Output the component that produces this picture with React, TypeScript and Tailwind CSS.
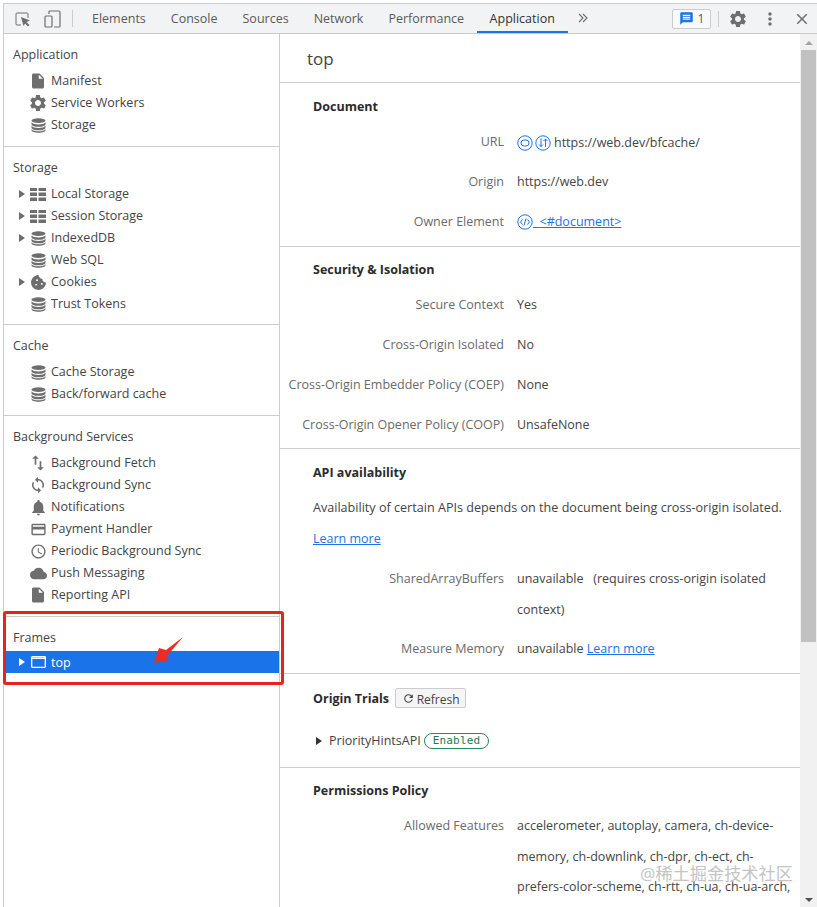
import { ReactNode } from "react";
import { FaCookieBite } from "react-icons/fa";
import {
  MdAccessTime,
  MdClose,
  MdCloud,
  MdCreditCard,
  MdInsertDriveFile,
  MdMessage,
  MdMoreVert,
  MdNotifications,
  MdRefresh,
  MdSettings,
  MdSwapVert,
  MdSync,
} from "react-icons/md";

const tabs = ["Elements", "Console", "Sources", "Network", "Performance"];

function TableIcon() {
  return (
    <svg width="16" height="13" viewBox="0 0 16 13" fill="currentColor">
      <rect x="0" y="0" width="7" height="3" />
      <rect x="8.5" y="0" width="7.5" height="3" />
      <rect x="0" y="4.5" width="7" height="3.5" />
      <rect x="8.5" y="4.5" width="7.5" height="3.5" />
      <rect x="0" y="9.5" width="7" height="3.5" />
      <rect x="8.5" y="9.5" width="7.5" height="3.5" />
    </svg>
  );
}

function Db() {
  return (
    <svg width="15" height="15" viewBox="0 0 15 15" fill="currentColor">
      <ellipse cx="7.5" cy="2.6" rx="7" ry="2.4" />
      <path d="M.5 4.300c1 1.500 3.800 2.200 7 2.200s6-.7 7-2.200V6.200c0 1.400-3 2.600-7 2.600S.5 7.600.5 6.200z" />
      <path d="M.5 7.800c1 1.500 3.800 2.200 7 2.200s6-.7 7-2.200v1.900c0 1.400-3 2.600-7 2.600s-7-1.200-7-2.600z" />
      <path d="M.5 11.200c1 1.400 3.800 2.100 7 2.100s6-.7 7-2.100v1.100c0 1.400-3 2.500-7 2.500s-7-1.100-7-2.500z" />
    </svg>
  );
}

function FrameIcon() {
  return (
    <svg width="15" height="12" viewBox="0 0 15 12" fill="none" stroke="currentColor">
      <rect x="0.700" y="0.700" width="13.600" height="10.600" rx="0.5" strokeWidth="1.300" />
      <path d="M1 2.200h13" strokeWidth="1.500" />
    </svg>
  );
}

function Caret({ dark }: { dark?: boolean }) {
  return (
    <svg width="6" height="8" viewBox="0 0 6 8" fill="currentColor" className={dark ? "text-[#333]" : ""}>
      <path d="M0 0l6 4-6 4z" />
    </svg>
  );
}

function SideItem({ icon, label, caret }: { icon: ReactNode; label: string; caret?: boolean }) {
  return (
    <div className="flex h-[22px] items-center text-[#444]">
      <div className="flex w-[22px] justify-end pr-[1px] text-[#6e6e6e]">{caret && <Caret />}</div>
      <div className="ml-[2px] flex w-[20px] justify-center text-[#6e6e6e]">{icon}</div>
      <span className="ml-[3px]">{label}</span>
    </div>
  );
}

function SideGroup({ title, children }: { title: string; children: ReactNode }) {
  return (
    <div className="border-b border-[#ccc] pt-[10px] pb-[10px]">
      <div className="flex h-[22px] items-center pl-[9px] text-[#444]">{title}</div>
      <div className="mt-[4px]">{children}</div>
    </div>
  );
}

function Row({ label, children }: { label: string; children: ReactNode }) {
  return (
    <div className="mt-[9.3px] flex leading-[30.5px]">
      <div className="w-[224px] shrink-0 text-right whitespace-nowrap text-[#6a6a6a]">{label}</div>
      <div className="ml-[13px] w-[280px] text-[#444]">{children}</div>
    </div>
  );
}

function RoundIcon({ children }: { children: ReactNode }) {
  return (
    <svg width="16" height="16" viewBox="0 0 16 16" fill="none" stroke="#1a73e8" strokeWidth="1" className="shrink-0">
      <circle cx="8" cy="8" r="7.200" />
      {children}
    </svg>
  );
}

export default function App() {
  return (
    <div
      className="relative h-[907px] w-[817px] overflow-hidden bg-white pt-[3px] pl-[3px] text-[12.5px]"
      style={{ fontFamily: '"Open Sans", "Noto Sans CJK SC", sans-serif' }}
    >
      <div className="flex h-[904px] flex-col border-l border-[#ccc]">
        {/* toolbar */}
        <header className="flex h-[31px] shrink-0 items-stretch border-t border-b border-[#ccc] bg-[#f1f3f4] text-[#5a5a5a]">
          <div className="flex w-[68px] items-center text-[#6e6e6e]">
            <svg width="16" height="16" viewBox="0 0 16 16" className="ml-[11px]" fill="none" stroke="currentColor">
              <path d="M6 14H2a1 1 0 0 1-1-1V3a1 1 0 0 1 1-1h10a1 1 0 0 1 1 1v4" strokeWidth="1" />
              <path d="M6 6l9 3.500-3.500 1.500 3 3-1.500 1.500-3-3L8.500 15z" fill="currentColor" stroke="none" />
            </svg>
            <svg width="17" height="18" viewBox="0 0 17 18" className="ml-[13px]" fill="none" stroke="currentColor">
              <path d="M5 4V2a1 1 0 0 1 1-1h9a1 1 0 0 1 1 1v14a1 1 0 0 1-1 1H10" strokeWidth="1.200" />
              <rect x="1" y="6" width="7" height="11" rx="1" strokeWidth="1.200" />
            </svg>
          </div>
          <div className="my-[6px] w-px bg-[#ccc]" />
          <div className="ml-[6.5px] flex">
            {tabs.map((t) => (
              <div key={t} className="flex items-center px-[12.5px] pt-[2px] whitespace-nowrap">
                {t}
              </div>
            ))}
            <div className="flex items-center border-b-2 border-[#1a73e8] px-[13px] pt-[4px] whitespace-nowrap text-[#333]">
              Application
            </div>
          </div>
          <div className="ml-[10px] flex items-center pb-[1px] text-[#6e6e6e]">
            <svg width="10" height="10" viewBox="0 0 10 10" fill="none" stroke="currentColor" strokeWidth="1.100">
              <path d="M1 1l4 4-4 4M5 1l4 4-4 4" />
            </svg>
          </div>
          <div className="ml-auto flex items-center text-[#6e6e6e]">
            <div className="flex h-[20px] w-[39px] items-center justify-center gap-[4px] rounded-[2px] border border-[#ccc] bg-[#f8f9fa] text-[12px] text-[#5a5a5a]">
              <MdMessage size={15} className="text-[#1a73e8]" />1
            </div>
            <div className="mx-[7px] h-[16px] w-px bg-[#ccc]" />
            <MdSettings size={20} className="ml-[2px]" />
            <MdMoreVert size={20} className="ml-[12px]" />
            <MdClose size={18} className="mr-[6px] ml-[13px]" />
          </div>
        </header>

        <div className="flex min-h-0 flex-1">
          {/* sidebar */}
          <aside className="w-[276px] shrink-0 border-r border-[#ccc]">
            <SideGroup title="Application">
              <SideItem icon={<MdInsertDriveFile size={18} />} label="Manifest" />
              <SideItem icon={<MdSettings size={20} />} label="Service Workers" />
              <SideItem icon={<Db />} label="Storage" />
            </SideGroup>
            <div className="[&>div]:pb-[9px]">
              <SideGroup title="Storage">
                <SideItem caret icon={<TableIcon />} label="Local Storage" />
                <SideItem caret icon={<TableIcon />} label="Session Storage" />
                <SideItem caret icon={<Db />} label="IndexedDB" />
                <SideItem icon={<Db />} label="Web SQL" />
                <SideItem caret icon={<FaCookieBite size={15} />} label="Cookies" />
                <SideItem icon={<Db />} label="Trust Tokens" />
              </SideGroup>
            </div>
            <SideGroup title="Cache">
              <SideItem icon={<Db />} label="Cache Storage" />
              <SideItem icon={<Db />} label="Back/forward cache" />
            </SideGroup>
            <SideGroup title="Background Services">
              <SideItem icon={<MdSwapVert size={20} />} label="Background Fetch" />
              <SideItem icon={<MdSync size={18} />} label="Background Sync" />
              <SideItem icon={<MdNotifications size={19} />} label="Notifications" />
              <SideItem icon={<MdCreditCard size={17} />} label="Payment Handler" />
              <SideItem icon={<MdAccessTime size={17} />} label="Periodic Background Sync" />
              <SideItem icon={<MdCloud size={17} />} label="Push Messaging" />
              <SideItem icon={<MdInsertDriveFile size={18} />} label="Reporting API" />
            </SideGroup>
            <div className="pt-[10px]">
              <div className="flex h-[22px] items-center pl-[9px] text-[#444]">Frames</div>
              <div className="mt-[2px] flex h-[22px] items-center bg-[#1a73e8] text-white">
                <div className="flex w-[22px] justify-end pr-[1px]">
                  <Caret />
                </div>
                <div className="ml-[2px] flex w-[20px] justify-center">
                  <FrameIcon />
                </div>
                <span className="ml-[3px] pt-[2px]">top</span>
              </div>
            </div>
          </aside>

          {/* main */}
          <main className="min-w-0 flex-1 overflow-hidden">
            <div className="flex h-[49px] items-center border-b border-[#ccc] pt-[1px] pl-[27px] text-[17px] text-[#444]">
              top
            </div>

            <section className="border-b border-[#ccc] pt-[13px] pb-[8.2px]">
              <h2 className="flex h-[22px] items-center pl-[33px] font-bold text-[#2b2b2b]">Document</h2>
              <div className="mt-[0.4px]">
                <Row label="URL">
                  <div className="flex h-[30.5px] items-center gap-[2px] pt-[1.5px]">
                    <RoundIcon>
                      <rect x="4" y="5" width="8" height="6" rx="3" />
                    </RoundIcon>
                    <RoundIcon>
                      <path d="M6 3.500v8M4 9.500l2 2 2-2M10.500 12V4M8.500 6l2-2 2 2" />
                    </RoundIcon>
                    <span className="ml-[1px]">https://web.dev/bfcache/</span>
                  </div>
                </Row>
                <Row label="Origin">https://web.dev</Row>
                <Row label="Owner Element">
                  <div className="flex items-center">
                    <RoundIcon>
                      <path d="M5.500 5.500L3.500 8l2 2.500M10.500 5.500l2 2.500-2 2.500M9 4.500L7 11.500" />
                    </RoundIcon>
                    <span className="whitespace-pre text-[#1a73e8] underline">  {"<#document>"}</span>
                  </div>
                </Row>
              </div>
            </section>

            <section className="border-b border-[#ccc] pt-[12.4px] pb-[8px]">
              <h2 className="flex h-[22px] items-center pl-[33px] font-bold text-[#2b2b2b]">Security & Isolation</h2>
              <div className="mt-[0.4px]">
                <Row label="Secure Context">Yes</Row>
                <Row label="Cross-Origin Isolated">No</Row>
                <Row label="Cross-Origin Embedder Policy (COEP)">None</Row>
                <Row label="Cross-Origin Opener Policy (COOP)">UnsafeNone</Row>
              </div>
            </section>

            <section className="border-b border-[#ccc] pt-[13px] pb-[8.2px]">
              <h2 className="flex h-[22px] items-center pl-[33px] font-bold text-[#2b2b2b]">API availability</h2>
              <p className="mt-[9px] pl-[33px] text-[12.6px] leading-[30.5px] whitespace-nowrap text-[#444]">
                Availability of certain APIs depends on the document being cross-origin isolated.
              </p>
              <p className="mt-[0.6px] pl-[33px] leading-[30.5px] text-[#1a73e8] underline">Learn more</p>
              <Row label="SharedArrayBuffers">
                <span className="whitespace-pre">unavailable   (requires cross-origin isolated</span>
                <br />
                context)
              </Row>
              <Row label="Measure Memory">
                unavailable <span className="text-[#1a73e8] underline">Learn more</span>
              </Row>
            </section>

            <section className="border-b border-[#ccc] pt-[14px] pb-[16px]">
              <div className="flex h-[20px] items-center pl-[33px]">
                <h2 className="pt-[3px] font-bold text-[#2b2b2b]">Origin Trials</h2>
                <button className="ml-[6px] flex h-[20px] w-[71px] items-center justify-center gap-[2px] rounded-[2px] border border-[#ccc] bg-[#f5f5f5] pt-[3px] text-[12px] text-[#444]">
                  <MdRefresh size={13} className="mb-[2px]" />
                  Refresh
                </button>
              </div>
              <div className="mt-[23px] flex h-[20px] items-center pl-[36px] text-[#444]">
                <Caret dark />
                <span className="ml-[7px]">PriorityHintsAPI</span>
                <span
                  className="ml-[3px] flex h-[16px] items-center rounded-full border border-[#1e8e5a] px-[8px] text-[11px] tracking-[0.2px] text-[#1e7a50]"
                  style={{ fontFamily: '"DejaVu Sans Mono", monospace' }}
                >
                  Enabled
                </span>
              </div>
            </section>

            <section className="pt-[12px]">
              <h2 className="flex h-[22px] items-center pl-[33px] font-bold text-[#2b2b2b]">Permissions Policy</h2>
              <div className="mt-[3.6px]">
                <Row label="Allowed Features">
                  accelerometer, autoplay, camera, ch-device-
                  <br />
                  memory, ch-downlink, ch-dpr, ch-ect, ch-
                  <br />
                  <span className="whitespace-nowrap">prefers-color-scheme, ch-rtt, ch-ua, ch-ua-arch,</span>
                </Row>
              </div>
            </section>
          </main>

          {/* scrollbar */}
          <div className="flex w-[17px] shrink-0 flex-col items-center bg-[#f1f1f1]">
            <div className="mt-[7px] h-0 w-0 border-x-[4px] border-b-[4px] border-x-transparent border-b-[#a3a3a3]" />
            <div className="mt-[5px] h-[592px] w-[15px] bg-[#c1c1c1]" />
            <div className="mt-auto mb-[5px] h-0 w-0 border-x-[4px] border-t-[4px] border-x-transparent border-t-[#505050]" />
          </div>
        </div>
      </div>

      {/* annotation drawn over the screenshot */}
      <div className="absolute top-[611px] left-[3px] h-[74px] w-[281px] rounded-[3px] border-[3px] border-[#e8231b]" />
      <svg className="absolute top-[636px] left-[152px]" width="32" height="30" viewBox="0 0 32 30">
        <path d="M31 1L14 14 7 12 2 27l15-3-2-4z" fill="#ee2c24" />
      </svg>
      <div className="absolute top-[861px] left-[640px] text-[17.2px] whitespace-nowrap text-[#c4c4c4] [text-shadow:0_0_1px_#fff]">
        @稀土掘金技术社区
      </div>
    </div>
  );
}
